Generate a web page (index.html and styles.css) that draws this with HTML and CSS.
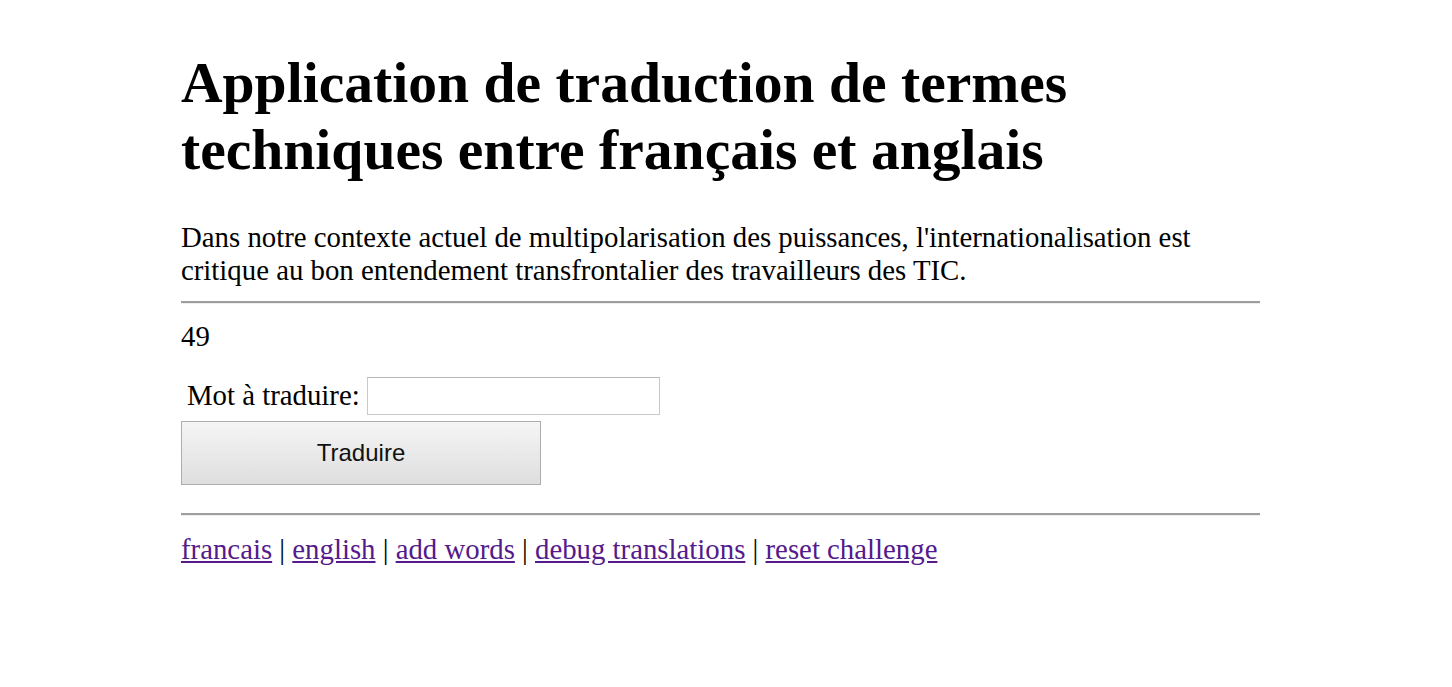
FILE: index.html
```html
<!DOCTYPE html>
<html lang="fr">
<head>
<meta charset="utf-8">
<title>Traduction</title>
<link rel="stylesheet" href="styles.css">
</head>
<body>
<div class="page">
  <h1 class="title">Application de traduction de termes techniques entre français et anglais</h1>
  <div class="intro">Dans notre contexte actuel de multipolarisation des puissances, l'internationalisation est critique au bon entendement transfrontalier des travailleurs des TIC.</div>
  <hr class="rule">
  <div class="count">49</div>
  <form class="form">
    <div class="field">
      <label class="label" for="mot">Mot à traduire:</label>
      <input class="input" id="mot" type="text">
    </div>
    <button class="btn" type="button">Traduire</button>
  </form>
  <hr class="rule">
  <div class="links">
    <a class="link" href="#">francais</a> | <a class="link" href="#">english</a> | <a class="link" href="#">add words</a> | <a class="link" href="#">debug translations</a> | <a class="link" href="#">reset challenge</a>
  </div>
</div>
</body>
</html>
```
FILE: styles.css
```css
html, body {
  margin: 0;
  padding: 0;
  background: #ffffff;
}
body {
  font-family: "Liberation Serif", "Times New Roman", serif;
  font-size: 28.8px;
  color: #000;
}
.page {
  width: 1079px;
  margin-left: 181px;
  padding-top: 1px;
}
.title {
  font-size: 57.6px;
  font-weight: bold;
  line-height: 67px;
  margin: 48px 0 38px 0;
}
.intro {
  margin: 0;
  line-height: normal;
}
.rule {
  border: none;
  border-top: 2px solid #9d9d9d;
  border-bottom: 1px solid #eeeeee;
  height: 0;
  margin: 14.4px 0;
}
.count {
  line-height: normal;
  padding-top: 1px;
}
.form {
  margin: 0;
}
.field {
  display: flex;
  align-items: center;
  gap: 7px;
  margin-top: 24px;
  padding-left: 6px;
}
.label {
  line-height: normal;
}
.input {
  box-sizing: border-box;
  width: 293px;
  height: 38px;
  border: 1px solid #c9c9c9;
  border-top-color: #b5b5b5;
  padding: 2px 4px;
  font-size: 24px;
  margin: 0;
}
.btn {
  display: block;
  box-sizing: border-box;
  width: 360px;
  height: 64px;
  margin: 6px 0 28px 0;
  border: 1px solid #adadad;
  background: linear-gradient(#f5f5f5, #dedede);
  font-family: "Liberation Sans", Arial, sans-serif;
  font-size: 24px;
  color: #111;
  padding: 0;
}
.links {
  line-height: normal;
  padding-top: 3px;
}
.link {
  color: #551a8b;
}
```
